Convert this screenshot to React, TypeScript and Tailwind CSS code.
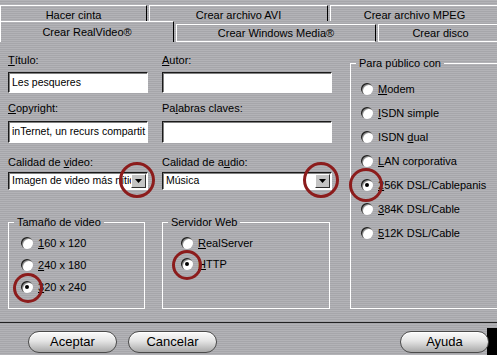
import React from "react"

const stripes =
  "bg-[repeating-linear-gradient(180deg,#b3b3b7_0px,#b3b3b7_1px,#a6a6aa_1px,#a6a6aa_2px)]"

function Radio({ checked = false }: { checked?: boolean }) {
  return (
    <span className="relative flex h-[12px] w-[12px] shrink-0 items-center justify-center rounded-full bg-white shadow-[inset_1px_1px_0_#202020,inset_2px_2px_0_#909090]">
      {checked && <span className="h-[4px] w-[4px] rounded-full bg-black" />}
    </span>
  )
}

function RadioRow({
  children,
  checked,
  h = "h-[22px]",
}: {
  children: React.ReactNode
  checked?: boolean
  h?: string
}) {
  return (
    <div className={`flex items-center gap-[5px] ${h}`}>
      <Radio checked={checked} />
      <span className="text-[11px] leading-[14px]">{children}</span>
    </div>
  )
}

function Input({ value = "", h }: { value?: string; h: string }) {
  return (
    <div
      className={`${h} flex items-center overflow-hidden whitespace-nowrap border-t border-l border-[#1a1a1a] border-r border-b border-r-white border-b-white bg-white pl-[3px] text-[10.5px] shadow-[inset_1px_1px_0_#808080]`}
    >
      {value}
    </div>
  )
}

function Select({ value }: { value: string }) {
  return (
    <div className="flex h-[18px] items-center overflow-hidden border-t border-l border-[#1a1a1a] border-r border-b border-r-white border-b-white bg-white pl-[3px] pr-[1px] text-[10.5px] shadow-[inset_1px_1px_0_#808080]">
      <span className="min-w-0 flex-1 overflow-hidden whitespace-nowrap">{value}</span>
      <span className="flex h-[14px] w-[15px] shrink-0 items-center justify-center border-t border-l border-white border-r border-b border-r-[#303030] border-b-[#303030] bg-[#c4c4c4]">
        <svg width="7" height="4" viewBox="0 0 7 4">
          <path d="M0 0h7L3.5 4z" fill="#000" />
        </svg>
      </span>
    </div>
  )
}

function Label({ children, className = "" }: { children: React.ReactNode; className?: string }) {
  return <div className={`h-[14px] text-[11px] leading-[14px] ${className}`}>{children}</div>
}

function Mark({ className }: { className: string }) {
  return (
    <div
      className={`pointer-events-none absolute rounded-full border-[3px] border-[#8c1c1c] ${className}`}
    />
  )
}

function PillButton({ label, className = "" }: { label: string; className?: string }) {
  return (
    <button
      className={`flex h-[22px] w-[89px] items-center justify-center rounded-full border border-[#4a4a4a] bg-[linear-gradient(180deg,#fbfbfb_0%,#e4e4e4_45%,#c4c4c4_75%,#a8a8a8_100%)] text-[13px] text-black shadow-[inset_0_1px_0_#ffffff] ${className}`}
    >
      {label}
    </button>
  )
}

export default function App() {
  return (
    <div
      className={`relative h-[355px] w-[497px] overflow-hidden text-black ${stripes}`}
      style={{ fontFamily: '"Liberation Sans", Arial, sans-serif' }}
    >
      {/* tabs - back row */}
      <div className="flex h-[21px] gap-[2px] pt-[5px] text-[11px]">
        <div className="flex w-[147px] shrink-0 items-center justify-center border-t border-l border-r border-white border-r-black pt-[3px]">
          Hacer cinta
        </div>
        <div className="flex w-[179px] shrink-0 items-center justify-center border-t border-l border-r border-white border-r-black pt-[3px]">
          Crear archivo AVI
        </div>
        <div className="flex w-[169px] shrink-0 items-center justify-center border-t border-l border-r border-white border-r-black pt-[3px]">
          Crear archivo MPEG
        </div>
      </div>

      {/* tabs - front row */}
      <div className="flex h-[21px] items-end gap-[2px] text-[11px]">
        <div className="flex h-full w-[174px] shrink-0 items-center justify-center border-t border-l border-r border-white border-r-black">
          Crear RealVideo®
        </div>
        <div className="flex h-[18px] w-[200px] shrink-0 items-center justify-center border border-white border-r-black">
          Crear Windows Media®
        </div>
        <div className="flex h-[18px] w-[125px] shrink-0 items-center justify-center border border-white border-r-black">
          Crear disco
        </div>
      </div>

      {/* panel */}
      <div className="flex h-[280px] pl-[8px]">
        <div className="flex w-[324px] shrink-0 flex-col">
          <div className="grid grid-cols-[140px_170px] gap-x-[14px]">
            <div className="flex flex-col pt-[11px]">
              <Label>
                <span className="underline">T</span>ítulo:
              </Label>
              <div className="mt-[5px]">
                <Input h="h-[21px]" value="Les pesqueres" />
              </div>
              <Label className="mt-[8px]">
                <span className="underline">C</span>opyright:
              </Label>
              <div className="mt-[6px]">
                <Input h="h-[22px]" value="inTernet, un recurs compartit" />
              </div>
              <Label className="mt-[12px]">
                Calidad de <span className="underline">v</span>ideo:
              </Label>
              <div className="mt-[3px]">
                <Select value="Imagen de video más nítido" />
              </div>
            </div>
            <div className="flex flex-col pt-[11px]">
              <Label>
                <span className="underline">A</span>utor:
              </Label>
              <div className="mt-[5px]">
                <Input h="h-[21px]" />
              </div>
              <Label className="mt-[8px]">
                Pa<span className="underline">l</span>abras claves:
              </Label>
              <div className="mt-[6px]">
                <Input h="h-[22px]" />
              </div>
              <Label className="mt-[12px]">
                Calidad de a<span className="underline">u</span>dio:
              </Label>
              <div className="mt-[3px]">
                <Select value="Música" />
              </div>
            </div>
          </div>

          <div className="mt-[25px] flex gap-[17px]">
            <fieldset className="h-[94px] w-[137px] border border-white">
              <legend className="ml-[5px] px-[3px] text-[11px] leading-[14px]">Tamaño de video</legend>
              <div className="flex flex-col pl-[12px] pt-[3px]">
                <RadioRow>
                  <span className="underline">1</span>60 x 120
                </RadioRow>
                <RadioRow>
                  <span className="underline">2</span>40 x 180
                </RadioRow>
                <RadioRow checked>
                  <span className="underline">3</span>20 x 240
                </RadioRow>
              </div>
            </fieldset>
            <fieldset className="h-[94px] w-[168px] border border-white">
              <legend className="ml-[5px] px-[3px] text-[11px] leading-[14px]">Servidor Web</legend>
              <div className="flex flex-col pl-[18px] pt-[3px]">
                <RadioRow h="h-[21px]">
                  <span className="underline">R</span>ealServer
                </RadioRow>
                <RadioRow h="h-[21px]" checked>
                  <span className="underline">H</span>TTP
                </RadioRow>
              </div>
            </fieldset>
          </div>
        </div>

        <fieldset className="ml-[18px] mt-[14px] h-[253px] w-[152px] shrink-0 border border-white">
          <legend className="ml-[5px] px-[3px] text-[11px] leading-[14px]">Para público con</legend>
          <div className="flex flex-col pl-[10px] pt-[7px]">
            <RadioRow h="h-[24px]">
              <span className="underline">M</span>odem
            </RadioRow>
            <RadioRow h="h-[24px]">
              <span className="underline">I</span>SDN simple
            </RadioRow>
            <RadioRow h="h-[24px]">
              ISDN <span className="underline">d</span>ual
            </RadioRow>
            <RadioRow h="h-[24px]">
              <span className="underline">L</span>AN corporativa
            </RadioRow>
            <RadioRow h="h-[24px]" checked>
              <span className="underline">2</span>56K DSL/Cablepanis
            </RadioRow>
            <RadioRow h="h-[24px]">
              <span className="underline">3</span>84K DSL/Cable
            </RadioRow>
            <RadioRow h="h-[24px]">
              <span className="underline">5</span>12K DSL/Cable
            </RadioRow>
          </div>
        </fieldset>
      </div>

      {/* button bar */}
      <div className="flex h-[33px] border-t border-[#222222] pt-[8px]">
        <PillButton label="Aceptar" className="ml-[28px]" />
        <PillButton label="Cancelar" className="ml-[11px]" />
        <PillButton label="Ayuda" className="relative z-10 ml-auto -mr-[2px]" />
        <div className="-mt-[3px] h-[27px] w-[10px] bg-black" />
      </div>

      {/* red annotation circles */}
      <Mark className="left-[119px] top-[162px] h-[36px] w-[36px]" />
      <Mark className="left-[303px] top-[162px] h-[36px] w-[36px]" />
      <Mark className="left-[349px] top-[168px] h-[34px] w-[34px]" />
      <Mark className="left-[172px] top-[250px] h-[30px] w-[30px]" />
      <Mark className="left-[13px] top-[273px] h-[30px] w-[30px]" />
    </div>
  )
}
